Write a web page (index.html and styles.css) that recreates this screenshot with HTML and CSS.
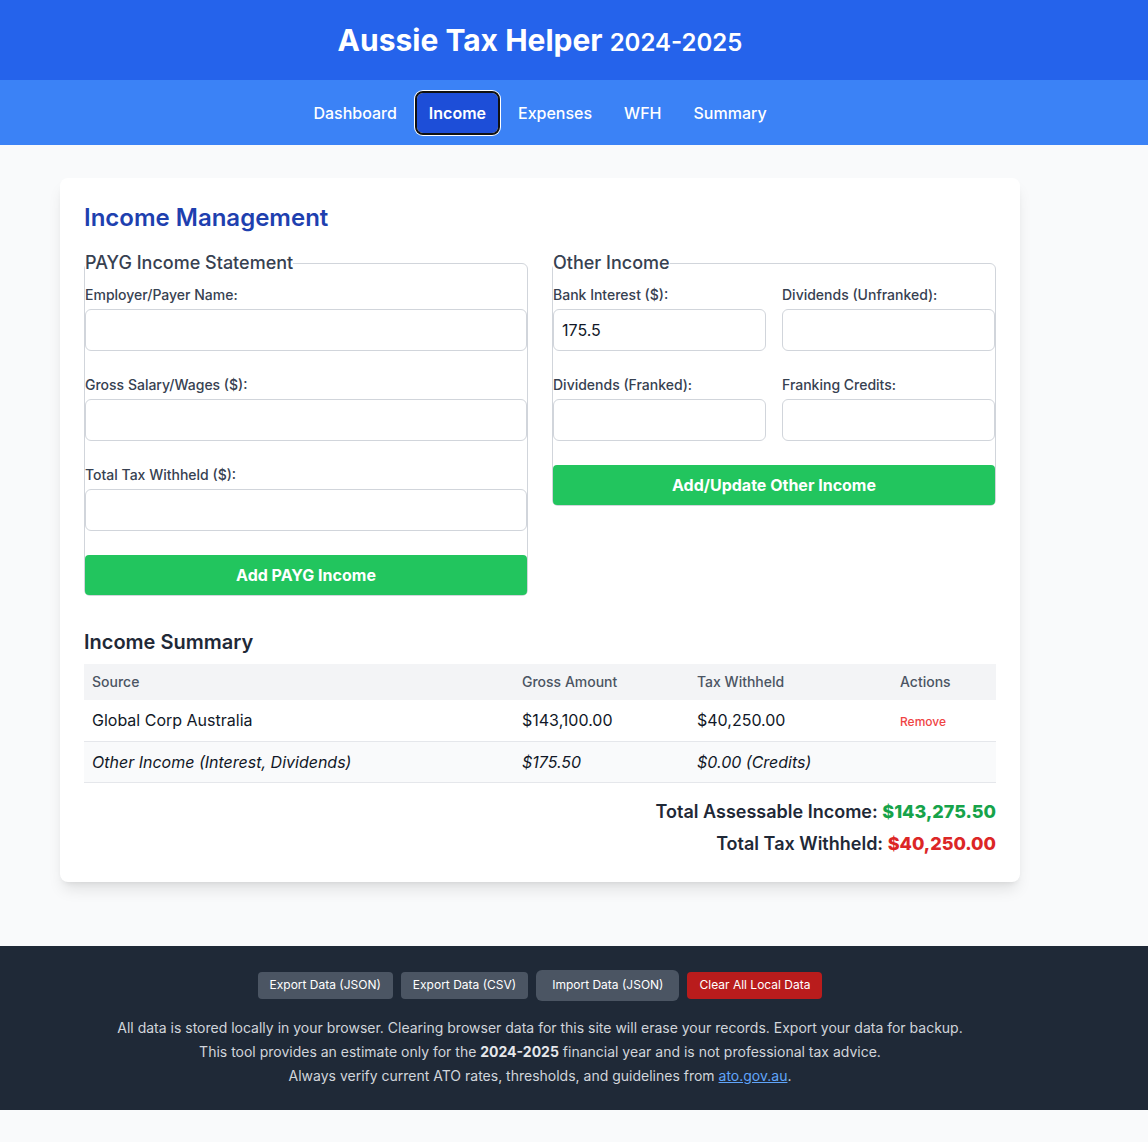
FILE: index.html
```html
<!DOCTYPE html>
<html lang="en">
<head>
<meta charset="utf-8">
<title>Aussie Tax Helper 2024-2025</title>
<link rel="stylesheet" href="styles.css">
</head>
<body>
<header class="top">
  <div class="inner top-row">
    <h1 class="brand">Aussie Tax Helper <span class="year">2024-2025</span></h1>
  </div>
</header>
<nav class="nav">
  <div class="inner nav-row">
    <a class="nav-item" href="#">Dashboard</a>
    <a class="nav-item active" href="#">Income</a>
    <a class="nav-item" href="#">Expenses</a>
    <a class="nav-item" href="#">WFH</a>
    <a class="nav-item" href="#">Summary</a>
  </div>
</nav>
<main class="main">
  <div class="inner">
    <section class="card">
      <h2 class="card-title">Income Management</h2>
      <div class="cols">
        <fieldset class="box">
          <legend class="legend">PAYG Income Statement</legend>
          <div class="box-body">
            <div class="field">
              <label class="label">Employer/Payer Name:</label>
              <input class="input" type="text">
            </div>
            <div class="field">
              <label class="label">Gross Salary/Wages ($):</label>
              <input class="input" type="text">
            </div>
            <div class="field">
              <label class="label">Total Tax Withheld ($):</label>
              <input class="input" type="text">
            </div>
            <button class="btn-green">Add PAYG Income</button>
          </div>
        </fieldset>
        <fieldset class="box">
          <legend class="legend">Other Income</legend>
          <div class="box-body">
            <div class="grid2">
              <div class="field">
                <label class="label">Bank Interest ($):</label>
                <input class="input" type="text" value="175.5">
              </div>
              <div class="field">
                <label class="label">Dividends (Unfranked):</label>
                <input class="input" type="text">
              </div>
              <div class="field">
                <label class="label">Dividends (Franked):</label>
                <input class="input" type="text">
              </div>
              <div class="field">
                <label class="label">Franking Credits:</label>
                <input class="input" type="text">
              </div>
            </div>
            <button class="btn-green">Add/Update Other Income</button>
          </div>
        </fieldset>
      </div>

      <h3 class="sum-title">Income Summary</h3>
      <table class="table">
        <colgroup>
          <col class="c1"><col class="c2"><col class="c3"><col class="c4">
        </colgroup>
        <thead>
          <tr><th>Source</th><th>Gross Amount</th><th>Tax Withheld</th><th>Actions</th></tr>
        </thead>
        <tbody>
          <tr><td>Global Corp Australia</td><td>$143,100.00</td><td>$40,250.00</td><td><a class="remove" href="#">Remove</a></td></tr>
          <tr class="other"><td>Other Income (Interest, Dividends)</td><td>$175.50</td><td>$0.00 (Credits)</td><td></td></tr>
        </tbody>
      </table>
      <div class="totals">
        <p class="total">Total Assessable Income: <span class="green">$143,275.50</span></p>
        <p class="total">Total Tax Withheld: <span class="red">$40,250.00</span></p>
      </div>
    </section>
  </div>
</main>
<footer class="foot">
  <div class="inner">
    <div class="foot-btns">
      <button class="fbtn">Export Data (JSON)</button>
      <button class="fbtn">Export Data (CSV)</button>
      <button class="fbtn import">Import Data (JSON)</button>
      <button class="fbtn danger">Clear All Local Data</button>
    </div>
    <p class="note">All data is stored locally in your browser. Clearing browser data for this site will erase your records. Export your data for backup.</p>
    <p class="note">This tool provides an estimate only for the <strong>2024-2025</strong> financial year and is not professional tax advice.</p>
    <p class="note">Always verify current ATO rates, thresholds, and guidelines from <a class="link" href="#">ato.gov.au</a>.</p>
  </div>
</footer>
</body>
</html>
```

FILE: styles.css
```css
* { box-sizing: border-box; }
html, body { margin: 0; padding: 0; }
body {
  font-family: Inter, "Noto Sans", "Liberation Sans", sans-serif;
  background: #f9fafb;
  color: #1f2937;
}
.inner { width: 1080px; }

.top { background: #2563eb; }
.top-row {
  height: 80px;
  display: flex;
  align-items: center;
  justify-content: center;
}
.brand {
  margin: 0;
  text-align: center;
  color: #fff;
  font-size: 30px;
  line-height: 36px;
  font-weight: 700;
}
.year { font-size: 24px; line-height: 24px; font-weight: 600; }

.nav { background: #3b82f6; height: 65px; }
.nav-row {
  height: 65px;
  display: flex;
  justify-content: center;
  align-items: center;
  gap: 8px;
}
.nav-item {
  display: block;
  color: #fff;
  text-decoration: none;
  font-size: 16px;
  line-height: 24px;
  font-weight: 500;
  padding: 8px 12px;
  border-radius: 6px;
}
.nav-item.active {
  background: #1d4ed8;
  font-weight: 600;
  outline: 2px solid #111;
  box-shadow: 0 0 0 3px #fff;
}

.main { padding: 33px 0 64px; }
.card {
  width: 960px;
  margin: 0 auto;
  background: #fff;
  border-radius: 8px;
  padding: 24px;
  box-shadow: 0 10px 15px -3px rgba(0,0,0,.1), 0 4px 6px -4px rgba(0,0,0,.1);
}
.card-title {
  margin: 0 0 15px;
  font-size: 24px;
  line-height: 32px;
  font-weight: 600;
  color: #1e40af;
}
.cols {
  display: grid;
  grid-template-columns: 1fr 1fr;
  gap: 24px;
  align-items: start;
}
.box {
  margin: 0;
  padding: 0;
  border: 1px solid #d1d5db;
  border-radius: 6px;
  min-width: 0;
}
.legend {
  padding: 0;
  font-size: 18px;
  line-height: 28px;
  font-weight: 500;
  color: #374151;
}
.box-body { padding-top: 8px; }
.field { margin-bottom: 24px; }
.label {
  display: block;
  font-size: 14px;
  line-height: 20px;
  font-weight: 500;
  color: #374151;
  margin-bottom: 4px;
}
.input {
  display: block;
  width: 100%;
  height: 42px;
  padding: 8px;
  font-family: inherit;
  font-size: 16px;
  line-height: 24px;
  color: #111827;
  border: 1px solid #d1d5db;
  border-radius: 6px;
  background: #fff;
}
.grid2 {
  display: grid;
  grid-template-columns: 1fr 1fr;
  column-gap: 16px;
}
.btn-green {
  display: block;
  width: 100%;
  height: 40px;
  border: 0;
  border-radius: 4px;
  background: #22c55e;
  color: #fff;
  font-family: inherit;
  font-size: 16px;
  font-weight: 700;
}

.sum-title {
  margin: 32px 0 8px;
  font-size: 20px;
  line-height: 28px;
  font-weight: 600;
  color: #1f2937;
}
.table {
  width: 100%;
  border-collapse: collapse;
  table-layout: fixed;
}
.c1 { width: 430px; }
.c2 { width: 175px; }
.c3 { width: 203px; }
.c4 { width: 104px; }
.table th {
  background: #f3f4f6;
  text-align: left;
  font-size: 14px;
  line-height: 20px;
  font-weight: 500;
  color: #4b5563;
  padding: 8px;
  height: 36px;
}
.table td {
  font-size: 16px;
  line-height: 24px;
  color: #111827;
  padding: 8px;
  height: 41px;
  border-bottom: 1px solid #e5e7eb;
}
.table tr.other td { background: #f9fafb; font-style: italic; }
.remove {
  color: #ef4444;
  font-size: 12px;
  line-height: 16px;
  font-weight: 500;
  text-decoration: none;
}
.totals { margin-top: 15px; text-align: right; }
.total {
  margin: 0 0 4px;
  font-size: 18px;
  line-height: 28px;
  font-weight: 600;
  color: #1f2937;
}
.total:last-child { margin-bottom: 0; }
.green { color: #16a34a; font-weight: 800; }
.red { color: #dc2626; font-weight: 800; }

.foot {
  background: #1f2937;
  padding: 24px 0 22px;
}
.foot-btns {
  display: flex;
  justify-content: center;
  align-items: center;
  gap: 8px;
  margin-bottom: 15px;
}
.fbtn {
  border: 0;
  border-radius: 4px;
  background: #4b5563;
  color: #fff;
  font-family: inherit;
  font-size: 12px;
  line-height: 16px;
  padding: 5.5px 12px;
}
.fbtn.import { padding: 7.5px 16px; border-radius: 6px; }
.fbtn.danger { background: #b91c1c; }
.note {
  margin: 0;
  text-align: center;
  font-size: 14px;
  line-height: 24px;
  color: #d1d5db;
}
.note strong { color: #e5e7eb; }
.link { color: #60a5fa; text-decoration: underline; }
```
